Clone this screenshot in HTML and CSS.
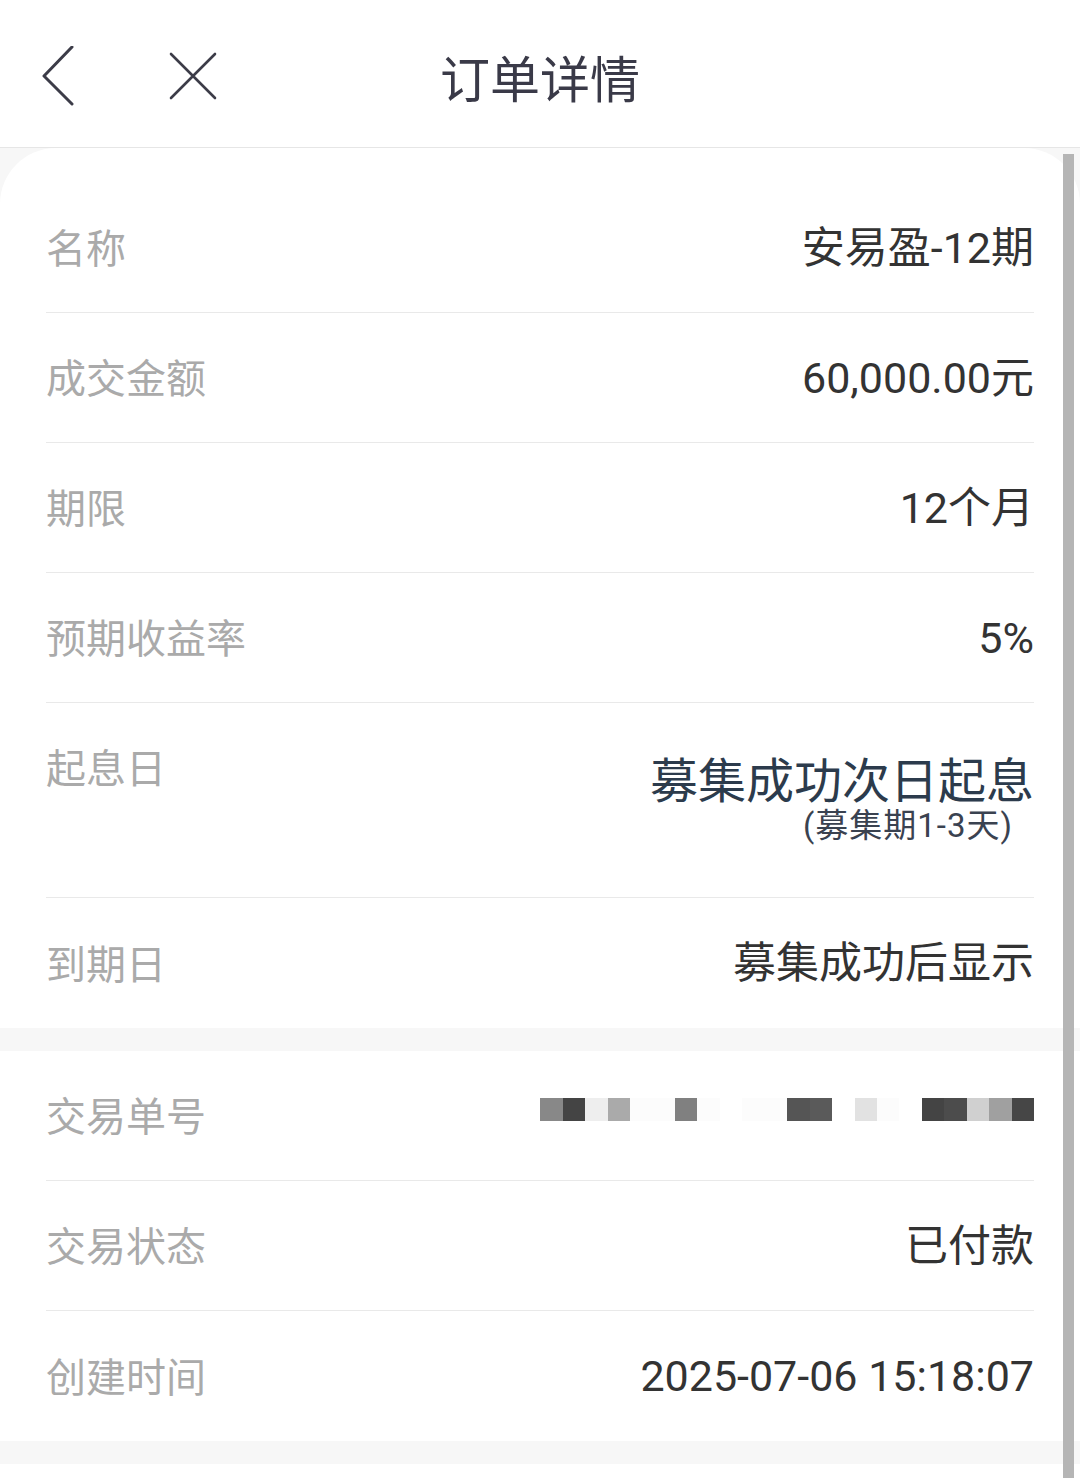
FILE: index.html
```html
<!DOCTYPE html>
<html lang="zh-CN">
<head>
<meta charset="utf-8">
<title>订单详情</title>
<link rel="stylesheet" href="styles.css">
</head>
<body>
<header class="topbar">
  <div class="nav-icons">
    <svg class="icon-back" width="34" height="60" viewBox="0 0 34 60"><path d="M31 1 L3 30 L31 58" fill="none" stroke="#3c3c48" stroke-width="3" stroke-linecap="round" stroke-linejoin="round"/></svg>
    <svg class="icon-close" width="50" height="50" viewBox="0 0 50 50"><path d="M3 3 L47 47 M47 3 L3 47" fill="none" stroke="#3c3c48" stroke-width="2.6" stroke-linecap="round"/></svg>
  </div>
  <h1 class="title">订单详情</h1>
  <div></div>
</header>

<main class="page">
  <section class="card card-top">
    <div class="row"><span class="label">名称</span><span class="value">安易盈-12期</span></div>
    <div class="row"><span class="label">成交金额</span><span class="value">60,000.00元</span></div>
    <div class="row"><span class="label">期限</span><span class="value">12个月</span></div>
    <div class="row"><span class="label">预期收益率</span><span class="value">5%</span></div>
    <div class="row row-tall">
      <span class="label">起息日</span>
      <div class="value-stack">
        <span class="value-big">募集成功次日起息</span>
        <span class="value-sub">(募集期1-3天)</span>
      </div>
    </div>
    <div class="row"><span class="label">到期日</span><span class="value">募集成功后显示</span></div>
  </section>

  <section class="card">
    <div class="row">
      <span class="label">交易单号</span>
      <div class="mask">
        <i class="c1"></i><i class="c2"></i><i class="c3"></i><i class="c4"></i><i class="c5"></i><i class="c5"></i><i class="c6"></i><i class="c5"></i><i></i><i class="c5"></i><i class="c5"></i><i class="c7"></i><i class="c8"></i><i></i><i class="c9"></i><i class="c5"></i><i></i><i class="c2"></i><i class="c10"></i><i class="c11"></i><i class="c12"></i><i class="c13"></i>
      </div>
    </div>
    <div class="row"><span class="label">交易状态</span><span class="value">已付款</span></div>
    <div class="row"><span class="label">创建时间</span><span class="value">2025-07-06 15:18:07</span></div>
  </section>

  <section class="card card-rest"></section>
</main>

<div class="scrollbar"></div>
</body>
</html>
```

FILE: styles.css
```css
html, body {
  margin: 0;
  padding: 0;
}
body {
  width: 1080px;
  height: 1478px;
  overflow: hidden;
  background: #f7f7f7;
  font-family: Roboto, "Noto Sans CJK SC", sans-serif;
  color: #333;
}

.topbar {
  height: 147px;
  background: #fff;
  border-bottom: 1px solid #e6e6e6;
  display: grid;
  grid-template-columns: 1fr auto 1fr;
  align-items: center;
}
.nav-icons {
  display: flex;
  align-items: center;
  padding-left: 41px;
  gap: 93px;
}
.icon-back { display: block; margin-top: 4px; }
.icon-close { display: block; margin-top: 4px; }
.title {
  margin: 0;
  font-family: "Noto Sans CJK SC", sans-serif;
  font-weight: 400;
  font-size: 50px;
  color: #3a3a48;
  letter-spacing: 0;
  padding-top: 4px;
}

.page {
  background: #f7f7f7;
  display: flex;
  flex-direction: column;
  gap: 23px;
}
.card {
  background: #fff;
  padding: 0 46px;
}
.card-top {
  border-radius: 56px 56px 0 0;
  padding-top: 35px;
}
.card-rest {
  height: 40px;
}

.row {
  height: 129px;
  border-bottom: 1px solid #e9e9e9;
  display: flex;
  align-items: center;
  justify-content: space-between;
}
.card .row:last-child {
  border-bottom: none;
  height: 130px;
}
.label {
  font-family: "Noto Sans CJK SC", sans-serif;
  font-size: 40px;
  line-height: 44px;
  color: #aaaaaa;
  margin-top: -3px;
}
.value {
  font-size: 43px;
  line-height: 48px;
  color: #333;
}

.row-tall {
  height: 195px;
  align-items: flex-start;
  box-sizing: border-box;
  padding-top: 44px;
}
.value-stack {
  display: flex;
  flex-direction: column;
  align-items: flex-end;
  padding-top: 7px;
}
.value-big {
  font-family: "Noto Sans CJK SC", sans-serif;
  font-size: 48px;
  line-height: 46px;
  color: #2c3b4c;
}
.value-sub {
  font-size: 33px;
  line-height: 36px;
  letter-spacing: 1px;
  color: #3a4250;
  margin-top: 8px;
  margin-right: 21px;
}

.mask {
  display: flex;
  margin-bottom: 12px;
}
.mask i {
  display: block;
  width: 22.45px;
  height: 23px;
  background: #fff;
}
.mask .c1 { background: #888; }
.mask .c2 { background: #444; }
.mask .c3 { background: #eee; }
.mask .c4 { background: #aaa; }
.mask .c5 { background: #fcfcfc; }
.mask .c6 { background: #808080; }
.mask .c7 { background: #555; }
.mask .c8 { background: #5a5a5a; }
.mask .c9 { background: #e2e2e2; }
.mask .c10 { background: #4c4c4c; }
.mask .c11 { background: #d0d0d0; }
.mask .c12 { background: #a0a0a0; }
.mask .c13 { background: #464646; }

.scrollbar {
  position: absolute;
  left: 1063px;
  top: 154px;
  width: 11px;
  height: 1324px;
  background: #b5b5b5;
}
```
